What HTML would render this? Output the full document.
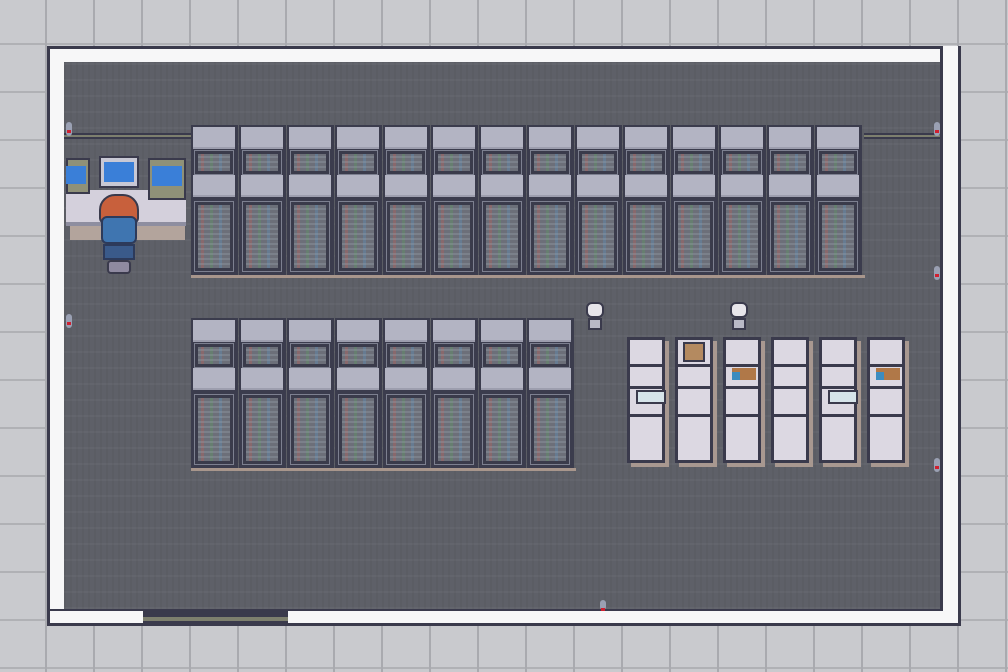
<!DOCTYPE html>
<html><head><meta charset="utf-8"><style>
*{margin:0;padding:0;box-sizing:border-box}
body{width:1008px;height:672px;overflow:hidden;position:relative;background:#c9cace;
background-image:repeating-linear-gradient(90deg,transparent 0 45px,#a9aaaf 45px 47px,transparent 47px 48px),repeating-linear-gradient(0deg,transparent 0 3px,#b0b1b5 3px 5px,transparent 5px 48px);}
.a{position:absolute}
#room{left:47px;top:46px;width:914px;height:580px;background:#3a3a4c}
#floor{left:64px;top:62px;width:877px;height:547px;background:#5e6068;
background-image:repeating-linear-gradient(90deg,rgba(0,0,0,.035) 0 2px,transparent 2px 6px),repeating-linear-gradient(0deg,rgba(255,255,255,.03) 0 2px,transparent 2px 16px)}
.w{background:#f7f7f8}
.r{position:absolute;width:47px;height:150px;background:#3b3c4d}
.r .c{position:absolute;left:2px;width:42px;height:22px;background:#b3b4c3;border-bottom:2px solid #9d9eae}
.r .p{position:absolute;left:4px;width:38px;background:#6c6f79;border:3px solid #3a3b4b;outline:1px solid #7d8090;
background-image:repeating-linear-gradient(0deg,transparent 0 3px,rgba(150,160,170,.35) 3px 5px),linear-gradient(90deg,transparent 3px,rgba(200,90,80,.3) 3px 6px,transparent 6px 12px,rgba(90,160,90,.3) 12px 15px,transparent 15px 21px,rgba(90,150,200,.3) 21px 24px,transparent 24px)}
.k{position:absolute;width:38px;height:126px;background:#dcd8e2;border:3px solid #3a3a4c;box-shadow:4px 4px 0 #a89890}
.k i{position:absolute;left:0;right:0;height:3px;background:#3a3a4c}
.ch{position:absolute;width:22px;height:30px}
.ch b{position:absolute;left:2px;top:0;width:18px;height:16px;border-radius:6px;background:#e7e5ea;border:2px solid #3a3a4c}
.ch s{position:absolute;left:4px;top:16px;width:14px;height:12px;background:#b9b9c6;border:2px solid #3a3a4c}
.pipe{height:6px;background:#7d7f6e;border-top:2px solid #3a3a4c;border-bottom:2px solid #3a3a4c}
.lamp{position:absolute;width:6px;height:14px;background:#9aa0b3;border-radius:3px}
.lamp:after{content:"";position:absolute;left:1px;top:8px;width:4px;height:3px;background:#d02030}
</style></head><body>
<div id="room" class="a"></div>
<div id="floor" class="a"></div>
<div class="a w" style="left:50px;top:49px;width:890px;height:13px"></div>
<div class="a w" style="left:50px;top:62px;width:14px;height:547px"></div>
<div class="a w" style="left:943px;top:46px;width:15px;height:577px"></div>
<div class="a" style="left:940px;top:46px;width:3px;height:580px;background:#3a3a4c"></div>
<div class="a w" style="left:50px;top:611px;width:93px;height:12px"></div>
<div class="a w" style="left:288px;top:611px;width:655px;height:12px"></div>
<div class="a" style="left:143px;top:617px;width:145px;height:4px;background:#7d7f6e"></div>
<div class="a pipe" style="left:64px;top:133px;width:128px"></div>
<div class="a pipe" style="left:864px;top:133px;width:76px"></div>
<div class="lamp" style="left:66px;top:122px"></div>
<div class="lamp" style="left:934px;top:122px"></div>
<div class="lamp" style="left:934px;top:266px"></div>
<div class="lamp" style="left:66px;top:314px"></div>
<div class="lamp" style="left:934px;top:458px"></div>
<div class="lamp" style="left:600px;top:600px;height:10px"></div>

<div class="a" style="left:66px;top:190px;width:120px;height:36px;background:#d4d0dc;border-bottom:4px solid #8e8ea0"></div>
<div class="a" style="left:70px;top:226px;width:115px;height:14px;background:#b3a49c"></div>
<div class="a" style="left:66px;top:158px;width:24px;height:36px;background:#8f9178;border:2px solid #3a3a4c"></div>
<div class="a" style="left:66px;top:166px;width:20px;height:18px;background:#3a7fd8"></div>
<div class="a" style="left:99px;top:156px;width:40px;height:32px;background:#c8c8d4;border:2px solid #3a3a4c"></div>
<div class="a" style="left:104px;top:162px;width:30px;height:20px;background:#3a7fd8"></div>
<div class="a" style="left:148px;top:158px;width:38px;height:42px;background:#8f9178;border:2px solid #3a3a4c"></div>
<div class="a" style="left:152px;top:166px;width:30px;height:20px;background:#3a7fd8"></div>
<div class="a" style="left:99px;top:194px;width:40px;height:30px;border-radius:16px 16px 6px 6px;background:#c8603c;border:2px solid #3a3a4c"></div>
<div class="a" style="left:101px;top:216px;width:36px;height:28px;background:#3f75b0;border:2px solid #2d3a5a;border-radius:6px"></div>
<div class="a" style="left:103px;top:244px;width:32px;height:16px;background:#3a5a8a;border:2px solid #2d3a5a"></div>
<div class="a" style="left:107px;top:260px;width:24px;height:14px;background:#8f8aa0;border:2px solid #3a3a4c;border-radius:4px"></div>

<div id="racks"></div>

<div class="ch" style="left:584px;top:302px"><b></b><s></s></div>
<div class="ch" style="left:728px;top:302px"><b></b><s></s></div>

<div class="k" style="left:627px;top:337px"><i style="top:24px"></i><i style="top:46px"></i><i style="top:74px"></i><div class="a" style="left:6px;top:50px;width:30px;height:14px;background:#d6e4ea;border:2px solid #3a3a4c"></div></div>
<div class="k" style="left:675px;top:337px"><i style="top:24px"></i><i style="top:46px"></i><i style="top:74px"></i><div class="a" style="left:5px;top:2px;width:22px;height:20px;background:#b48a60;border:2px solid #3a3a4c"></div></div>
<div class="k" style="left:723px;top:337px"><i style="top:24px"></i><i style="top:46px"></i><i style="top:74px"></i><div class="a" style="left:6px;top:28px;width:24px;height:12px;background:#b07848"></div><div class="a" style="left:6px;top:32px;width:8px;height:8px;background:#3b8cc0"></div></div>
<div class="k" style="left:771px;top:337px"><i style="top:24px"></i><i style="top:46px"></i><i style="top:74px"></i></div>
<div class="k" style="left:819px;top:337px"><i style="top:24px"></i><i style="top:46px"></i><i style="top:74px"></i><div class="a" style="left:6px;top:50px;width:30px;height:14px;background:#d6e4ea;border:2px solid #3a3a4c"></div></div>
<div class="k" style="left:867px;top:337px"><i style="top:24px"></i><i style="top:46px"></i><i style="top:74px"></i><div class="a" style="left:6px;top:28px;width:24px;height:12px;background:#b07848"></div><div class="a" style="left:6px;top:32px;width:8px;height:8px;background:#3b8cc0"></div></div>

<div class="a" style="left:191px;top:275px;width:674px;height:3px;background:#a8968c"></div>
<div class="a" style="left:191px;top:468px;width:385px;height:3px;background:#a8968c"></div>
<script>
var h='',rack=function(x,y){return '<div class="r" style="left:'+x+'px;top:'+y+'px"><div class="c" style="top:2px"></div><div class="p" style="top:26px;height:23px"></div><div class="c" style="top:50px"></div><div class="p" style="top:77px;height:69px"></div></div>';};
for(var i=0;i<14;i++)h+=rack(191+48*i,125);
for(var i=0;i<8;i++)h+=rack(191+48*i,318);
document.getElementById('racks').innerHTML=h;
</script>
</body></html>
